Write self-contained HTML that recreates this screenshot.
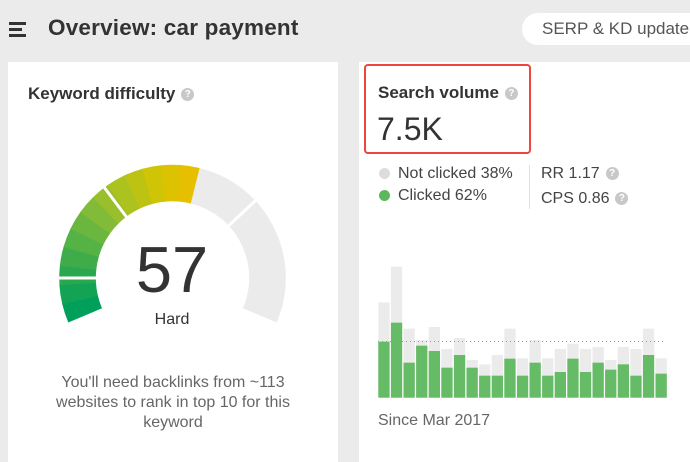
<!DOCTYPE html>
<html><head><style>
body{margin:0;width:690px;height:451px;background:#ebebeb;font-family:"Liberation Sans",sans-serif;position:relative;overflow:hidden;color:#333}
.a{position:absolute}
.q{display:inline-block;width:13px;height:13px;border-radius:50%;background:#c8c8c8;color:#fff;font-size:10px;font-weight:bold;text-align:center;line-height:13px;vertical-align:2px;margin-left:6px}
</style></head><body>
<div class="a" style="left:9px;top:22px;width:17px;height:3px;background:#333"></div>
<div class="a" style="left:9px;top:28px;width:13px;height:3px;background:#333"></div>
<div class="a" style="left:9px;top:34px;width:17px;height:3px;background:#333"></div>
<div class="a" style="left:48px;top:15px;font-size:22.5px;font-weight:bold;color:#333;letter-spacing:0.2px">Overview: car payment</div>
<div class="a" style="left:522px;top:13px;width:200px;height:32px;border-radius:16px;background:#fff;"></div>
<div class="a" style="left:542px;top:19px;font-size:17px;color:#555;white-space:nowrap">SERP &amp; KD update</div>

<div class="a" style="left:8px;top:62px;width:330px;height:400px;background:#fff"></div>
<div class="a" style="left:359px;top:62px;width:340px;height:400px;background:#fff"></div>

<div class="a" style="left:28px;top:84px;font-size:17px;font-weight:bold;color:#333">Keyword difficulty<span class="q">?</span></div>

<svg class="a" style="left:0;top:0" width="690" height="451">
<g id="g"></g>
</svg>
<script>
var cx=172.5,cy=278,R=113,r=77;
function pt(a,rr){var t=a*Math.PI/180;return [cx+rr*Math.cos(t),cy-rr*Math.sin(t)];}
function seg(a1,a2,c){var p1=pt(a1,R),p2=pt(a2,R),p3=pt(a2,r),p4=pt(a1,r);var l=(a1-a2)>180?1:0;
return '<path d="M'+p1+' A'+R+' '+R+' 0 '+l+' 1 '+p2+' L'+p3+' A'+r+' '+r+' 0 '+l+' 0 '+p4+'Z" fill="'+c+'" stroke="'+c+'" stroke-width="0.6"/>';}
var cols=['#00a05a','#13a355','#2aa84f','#3fac4a','#55b244','#6bb63e','#82bb37','#99bf2d','#acc21f','#bdc312','#cfc405','#dcc200','#e6c000'];
var s='',a0=203,a1=76,n=cols.length;
for(var i=0;i<n;i++){s+=seg(a0-(a0-a1)*i/n,a0-(a0-a1)*(i+1)/n,cols[i]);}
s+=seg(76,-23,'#ebebeb');
[180,127,43].forEach(function(a){var p=pt(a,r-2),q=pt(a,R+2);s+='<line x1="'+p[0]+'" y1="'+p[1]+'" x2="'+q[0]+'" y2="'+q[1]+'" stroke="#fff" stroke-width="3"/>';});
var g=[[157,275],[50,218],[236,338],[270,287],[231,303],[297,353],[264,315],[330,353],[343,377],[315,377],[236,326],[325,377],[270,338],[325,377],[297,366],[281,326],[297,366],[291,338],[330,359],[291,343],[297,377],[236,315],[325,371]];
g.forEach(function(b,i){var x=378.3+i*12.6,y1=250+b[0]/3,y2=250+b[1]/3,bt=397.7;
s+='<rect x="'+x+'" y="'+y1+'" width="11.3" height="'+(bt-y1)+'" fill="#ebebeb"/>';
s+='<rect x="'+x+'" y="'+y2+'" width="11.3" height="'+(bt-y2)+'" fill="#66bb66"/>';});
s+='<line x1="378" y1="341.5" x2="665" y2="341.5" stroke="#999" stroke-width="1" stroke-dasharray="1,3"/>';
document.getElementById('g').innerHTML=s;
</script>
<div class="a" style="left:122px;top:232px;width:100px;text-align:center;font-size:65px;color:#333;line-height:76px">57</div>
<div class="a" style="left:122px;top:311px;width:100px;text-align:center;font-size:16px;color:#333">Hard</div>
<div class="a" style="left:48px;top:373px;width:250px;text-align:center;font-size:16px;color:#666;line-height:20px">You'll need backlinks from ~113 websites to rank in top 10 for this keyword</div>

<div class="a" style="left:364px;top:64px;width:163px;height:86px;border:2px solid #f0443c;border-radius:4px"></div>
<div class="a" style="left:378px;top:83px;font-size:17px;font-weight:bold;color:#333">Search volume<span class="q">?</span></div>
<div class="a" style="left:377px;top:111px;font-size:32px;color:#333">7.5K</div>
<div class="a" style="left:379px;top:168px;width:11px;height:11px;border-radius:50%;background:#dcdcdc"></div>
<div class="a" style="left:398px;top:165px;font-size:16px;color:#444">Not clicked 38%</div>
<div class="a" style="left:379px;top:190px;width:11px;height:11px;border-radius:50%;background:#5cb85c"></div>
<div class="a" style="left:398px;top:187px;font-size:16px;color:#444">Clicked 62%</div>
<div class="a" style="left:529px;top:165px;width:1px;height:44px;background:#e0e0e0"></div>
<div class="a" style="left:541px;top:165px;font-size:16px;color:#444">RR 1.17<span class="q">?</span></div>
<div class="a" style="left:541px;top:190px;font-size:16px;color:#444">CPS 0.86<span class="q">?</span></div>
<div class="a" style="left:378px;top:412px;font-size:16px;color:#666">Since Mar 2017</div>
</body></html>
